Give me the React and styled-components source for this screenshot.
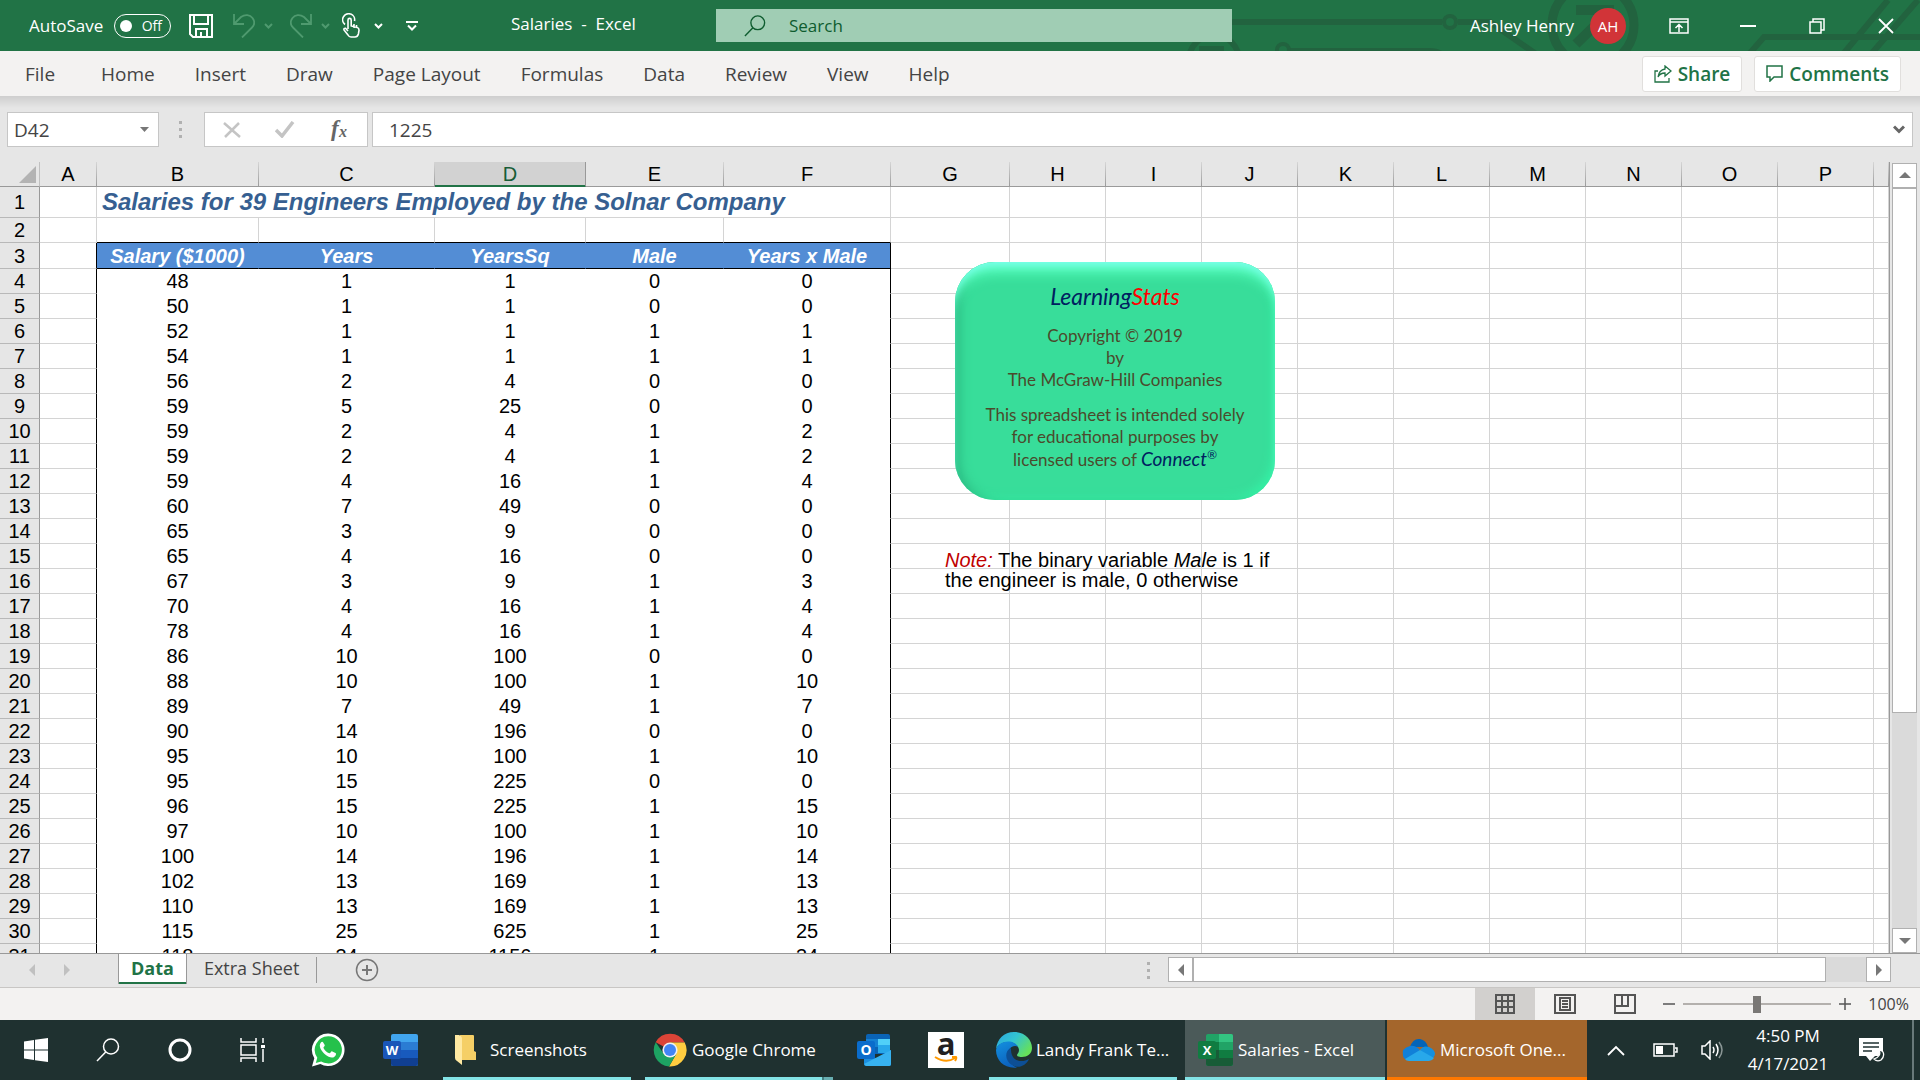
import React, { useState } from 'react';
import styled, { createGlobalStyle, css } from 'styled-components';

const GlobalStyle = createGlobalStyle`
  * {
    box-sizing: border-box;
  }

  body {
    margin: 0;
    font-family: 'Open Sans', 'Noto Sans', sans-serif;
    color: #444;
  }

  button, input {
    font: inherit;
    color: inherit;
    border: none;
    background: none;
    padding: 0;
    margin: 0;
  }

  svg {
    display: block;
    flex: none;
  }
`;

const Window = styled.div`
  display: flex;
  flex-direction: column;
  height: 100vh;
  overflow: hidden;
  background: #e6e6e6;
`;

/* ---------- title bar ---------- */

const TitleBar = styled.header`
  position: relative;
  display: grid;
  grid-template-columns: 511px 205px minmax(200px, 516px) 1fr;
  align-items: center;
  height: 51px;
  flex: none;
  background: #217346;
  color: #fff;
  font-size: 17px;
`;

const Circuit = styled.svg`
  position: absolute;
  right: 0;
  top: 0;
`;

const QuickAccess = styled.div`
  display: flex;
  align-items: center;
  height: 51px;
  padding-left: 29px;
`;

const AutoSaveLabel = styled.span`
  min-width: 85px;
`;

const Toggle = styled.button`
  display: flex;
  align-items: center;
  justify-content: space-between;
  width: 57px;
  height: 24px;
  margin-right: 16px;
  padding: 0 8px 0 5px;
  border: 1px solid #fff;
  border-radius: 12px;
  font-size: 14px;
`;

const Knob = styled.span`
  width: 12px;
  height: 12px;
  border-radius: 50%;
  background: #fff;
`;

const ToolButton = styled.button`
  display: flex;
  align-items: center;
  justify-content: center;
  width: ${(props) => props.$width || 28}px;
  height: 34px;
  margin-left: ${(props) => props.$gap || 0}px;
  color: ${(props) => (props.$dim ? '#4f9a6f' : '#fff')};
`;

const DocTitle = styled.span`
  position: relative;
  padding-bottom: 4px;
  white-space: pre;
`;

const SearchBox = styled.label`
  position: relative;
  display: flex;
  align-items: center;
  height: 33px;
  padding-left: 28px;
  background: #a0cdb4;
  color: #0e5c2f;

  input {
    flex: 1;
    margin-left: 23px;
    outline: none;
  }

  input::placeholder {
    color: #0e5c2f;
    opacity: 1;
  }
`;

const Account = styled.div`
  position: relative;
  display: flex;
  align-items: center;
  justify-content: flex-end;
`;

const Avatar = styled.span`
  width: 36px;
  height: 36px;
  margin: 0 18px 0 16px;
  border-radius: 50%;
  background: #d13438;
  font-size: 15px;
  line-height: 36px;
  text-align: center;
`;

/* ---------- ribbon ---------- */

const Ribbon = styled.nav`
  display: flex;
  align-items: center;
  height: 45px;
  flex: none;
  padding: 0 19px 0 5px;
  background: #f3f2f1;
  font-size: 19px;
`;

const RibbonTab = styled.button`
  height: 45px;
  padding: 0 20px;
  white-space: nowrap;

  &:first-child {
    margin-right: 6px;
  }
`;

const RibbonAction = styled.button`
  display: flex;
  align-items: center;
  gap: 6px;
  height: 36px;
  margin-left: 12px;
  padding: 0 11px;
  border: 1px solid #e1dfdd;
  border-radius: 3px;
  background: #fff;
  color: #217346;
  font-weight: 600;
`;

const Spacer = styled.div`
  flex: 1;
`;

/* ---------- formula bar ---------- */

const FormulaBar = styled.div`
  display: flex;
  align-items: flex-start;
  height: 66px;
  flex: none;
  padding: 16px 7px 0;
  background: linear-gradient(#cecece, #e6e6e6 12px);
  font-size: 19px;
`;

const Field = styled.div`
  display: flex;
  align-items: center;
  height: 35px;
  border: 1px solid #c6c6c6;
  background: #fff;

  input {
    flex: 1;
    min-width: 0;
    outline: none;
  }
`;

const NameBox = styled(Field)`
  width: 152px;
  padding: 0 9px 0 6px;
`;

const FormulaButtons = styled(Field)`
  justify-content: space-between;
  width: 164px;
  margin-right: 4px;
  padding: 0 18px;
`;

const FormulaInput = styled(Field)`
  flex: 1;
  padding: 0 7px 0 16px;
`;

const Dots = styled.span`
  display: flex;
  flex-direction: column;
  gap: 4px;
  margin: ${(props) => props.$margin};

  i {
    width: 3px;
    height: 3px;
    background: #b1b1b1;
  }
`;

/* ---------- worksheet ---------- */

const SheetPane = styled.main`
  display: flex;
  flex: 1;
  min-height: 0;
`;

const GridArea = styled.div`
  position: relative;
  flex: 1;
  min-width: 0;
  overflow: hidden;
  border-right: 1px solid #999;
  background: #fff;
`;

const Grid = styled.table`
  width: 100%;
  table-layout: fixed;
  border-collapse: separate;
  border-spacing: 0;
  font-family: 'Liberation Sans', Arial, sans-serif;
  font-size: 20px;
  line-height: 24px;
  color: #000;
  text-align: center;

  th, td {
    padding: 0;
    font-weight: 400;
    white-space: nowrap;
  }
`;

const Row = styled.tr`
  height: ${(props) => props.$height || 25}px;
`;

const ColumnHead = styled.th`
  border-right: 1px solid;
  border-image: linear-gradient(#d8d8d8, #999) 1;
  border-bottom: 1px solid #999;
  background: #e6e6e6;

  ${(props) =>
    props.$selected &&
    css`
      border-image: none;
      border-right-color: #999;
      border-bottom-color: #217346;
      box-shadow: inset 0 -1px #217346;
      background: #d2d2d2;
      color: #185c37;
    `}
`;

const Corner = styled.th`
  border-right: 1px solid #c0c0c0;
  border-bottom: 1px solid #999;
  background: #e6e6e6;

  svg {
    margin-left: 19px;
  }
`;

const RowHead = styled.th`
  border-right: 1px solid #999;
  border-bottom: 1px solid #b8b8b8;
  background: #e6e6e6;
`;

const Cell = styled.td`
  border-right: 1px solid ${(props) => props.$right || '#d4d4d4'};
  border-bottom: 1px solid ${(props) => props.$bottom || '#d4d4d4'};
`;

const SheetTitle = styled(Cell)`
  && {
    padding-left: 5px;
    text-align: left;
    font-size: 24px;
    font-weight: 700;
  }
  font-style: italic;
  color: #365f91;
`;

const FieldHead = styled(Cell)`
  && {
    font-weight: 700;
  }
  font-style: italic;
  background: #538dd5;
  color: #fff;
`;

const Badge = styled.div`
  position: absolute;
  left: 955px;
  top: 100px;
  width: 320px;
  height: 238px;
  padding-top: 22px;
  border-radius: 40px;
  background: #38dd9a;
  box-shadow:
    inset 0 8px 8px -4px #7cffec,
    inset 0 18px 12px -6px #54fcba,
    inset 8px 0 12px -4px #2bb880,
    inset -6px -6px 10px -4px #36f2a6;
  font-family: Lato, 'Open Sans', sans-serif;
  font-size: 17px;
  line-height: 22px;
  text-align: center;
  color: #4b4a2c;

  p {
    margin: 0 0 13px;
  }

  em {
    font-size: 19px;
    color: #002060;
  }

  sup {
    font-size: 12px;
    line-height: 0;
  }
`;

const BadgeTitle = styled.h2`
  margin: 0 0 17px;
  font-size: 23px;
  font-weight: 400;
  font-style: italic;
  line-height: 24px;
  color: #002060;

  span {
    color: #ff0000;
  }
`;

const Note = styled.p`
  position: absolute;
  left: 945px;
  top: 388px;
  width: 345px;
  margin: 0;
  font-family: 'Liberation Sans', Arial, sans-serif;
  font-size: 20px;
  line-height: 20px;
  color: #000;

  span {
    font-style: italic;
    color: #c00000;
  }
`;

/* ---------- scroll bars ---------- */

const VerticalScroll = styled.div`
  display: flex;
  flex-direction: column;
  width: 30px;
  padding: 1px 3px 0 2px;
`;

const HorizontalScroll = styled.div`
  display: flex;
  width: 723px;
  height: 25px;
  margin: 3px 29px 0 0;
`;

const ScrollTrack = styled.div`
  display: flex;
  flex-direction: ${(props) => (props.$vertical ? 'column' : 'row')};
  flex: 1;
  background: #dadada;
`;

const ScrollThumb = styled.div`
  flex: 0 0 ${(props) => props.$size};
  border: 1px solid #b0b0b0;
  background: #fff;
`;

const ScrollButton = styled.button`
  display: flex;
  align-items: center;
  justify-content: center;
  flex: none;
  width: 25px;
  height: 25px;
  border: 1px solid #b0b0b0;
  background: #fff;
`;

/* ---------- sheet tabs and status bar ---------- */

const TabBar = styled.div`
  display: flex;
  align-items: flex-start;
  height: 35px;
  flex: none;
  border-top: 1px solid #999;
  border-bottom: 1px solid #c8c6c4;
  font-size: 18px;
`;

const TabArrows = styled.div`
  display: flex;
  align-items: center;
  gap: 23px;
  width: 118px;
  height: 31px;
  padding-left: 26px;
`;

const SheetTab = styled.button`
  height: 30px;
  padding: 0 17px 2px;

  ${(props) =>
    props.$active &&
    css`
      padding: 0 12px 2px;
      border: solid #999;
      border-width: 0 1px;
      box-shadow: inset 0 -2px #217346;
      background: #fff;
      color: #217346;
      font-weight: 700;
    `}
`;

const TabDivider = styled.span`
  width: 1px;
  height: 26px;
  margin: 3px 38px 0 0;
  background: #999;
`;

const AddSheet = styled.button`
  margin-top: 4px;
`;

const StatusBar = styled.footer`
  display: flex;
  align-items: center;
  justify-content: flex-end;
  height: 32px;
  flex: none;
  padding-right: 11px;
  background: #f3f2f1;
  font-size: 16px;
`;

const ViewButton = styled.button`
  display: flex;
  align-items: center;
  justify-content: center;
  width: 60px;
  height: 32px;
  background: ${(props) => (props.$active ? '#d2d0ce' : 'none')};
`;

const ZoomButton = styled.button`
  width: 12px;
  margin: 0 8px;
`;

const ZoomSlider = styled.input`
  width: 148px;
  height: 18px;
  appearance: none;
  background: linear-gradient(#b3b0ad, #b3b0ad) center / 100% 2px no-repeat;

  &::-webkit-slider-thumb {
    appearance: none;
    width: 8px;
    height: 17px;
    background: #797775;
  }
`;

const ZoomLevel = styled.span`
  min-width: 50px;
  text-align: right;
`;

/* ---------- taskbar ---------- */

const Taskbar = styled.div`
  display: flex;
  height: 60px;
  flex: none;
  background: #1f3130;
  color: #fff;
  font-size: 17px;
`;

const TaskIcon = styled.button`
  display: flex;
  align-items: center;
  justify-content: center;
  width: 72px;
  margin-left: ${(props) => props.$gap || 0}px;
`;

const TaskItem = styled.button`
  display: flex;
  align-items: center;
  gap: ${(props) => props.$gap || 5}px;
  width: ${(props) => props.$width || 188}px;
  margin-left: ${(props) => props.$before || 0}px;
  padding-left: ${(props) => props.$inset || 8}px;
  padding-top: 2px;
  border-bottom: 3px solid ${(props) => props.$line || '#83e3e6'};
  background: ${(props) => props.$fill || 'none'};
  white-space: nowrap;

  ${(props) =>
    props.$stacked &&
    css`
      border-image: linear-gradient(to right, #83e3e6 174px, #477f80 174px, #477f80 176px, #68aeb1 176px) 3;
    `}
`;

const Tray = styled.div`
  display: flex;
  align-items: center;
  margin-left: auto;
`;

const Clock = styled.time`
  width: 90px;
  margin: 0 26px 0 18px;
  line-height: 28px;
  text-align: center;
  white-space: nowrap;
`;

const ShowDesktop = styled.button`
  width: 8px;
  height: 60px;
  margin-left: 27px;
  border-left: 2px solid #69797a;
`;

const AmazonTile = styled.span`
  display: flex;
  background: #fff;
`;

/* ---------- small drawings ---------- */

const Chevron = ({ size = 9, width = 2 }) => (
  <svg width={size} height="6" viewBox="0 0 9 6" fill="none" stroke="currentColor" strokeWidth={width}>
    <path d="M1 1l3.5 3.5L8 1" />
  </svg>
);

const Arrow = ({ dir, color = '#777' }) => {
  const shapes = {
    up: 'M0 8L6 2l6 6z',
    down: 'M0 3h12L6 9z',
    left: 'M9 0v12L3 6z',
    right: 'M3 0v12l6-6z',
  };
  return (
    <svg width="12" height="12" fill={color}>
      <path d={shapes[dir]} />
    </svg>
  );
};

const SearchGlyph = ({ size = 24 }) => (
  <svg width={size} height={size} viewBox="0 0 24 24" fill="none" stroke="currentColor" strokeWidth="1.5">
    <circle cx="15" cy="8.5" r="7.5" />
    <path d="M9.7 14L1 23" />
  </svg>
);

const UndoGlyph = ({ flip }) => (
  <svg width="22" height="24" viewBox="0 0 22 24" fill="none" stroke="currentColor" strokeWidth="1.8">
    <path
      transform={flip ? 'translate(22 0) scale(-1 1)' : undefined}
      d="M1 0v10h10M1.5 9.5L8 3c4-3 9-2.500 11.500 1s2 7-.5 9.500L9 23.500"
    />
  </svg>
);

const OfficeLogo = ({ letter, tones, tile }) => (
  <svg width="36" height="34" viewBox="0 0 36 34">
    <rect x="9" y="1" width="27" height="32" rx="2" fill={tones[0]} />
    <path d="M9 9h27v8H9z" fill={tones[1]} />
    <path d="M9 17h27v8H9z" fill={tones[2]} />
    <path d="M9 25h27v6a2 2 0 0 1-2 2H11a2 2 0 0 1-2-2z" fill={tones[3]} />
    {letter === 'X' && (
      <>
        <path d="M22 1h12a2 2 0 0 1 2 2v6H22z" fill="#33c481" />
        <path d="M22 9h14v8H22z" fill="#21a366" />
        <path d="M9 17h13v8H9z" fill="#185c37" />
      </>
    )}
    <rect x="1" y="8" width="18" height="18" rx="2" fill={tile} />
    <text x="10" y="22" fill="#fff" fontSize="13" fontWeight="700" textAnchor="middle" fontFamily="Open Sans, sans-serif">
      {letter}
    </text>
  </svg>
);

const OutlookLogo = () => (
  <svg width="36" height="34" viewBox="0 0 36 34">
    <rect x="10" y="1" width="24" height="20" rx="2" fill="#0a63b5" />
    <path d="M10 6h12v8H10z" fill="#1480d3" />
    <path d="M22 6h12v6H22z" fill="#50d0f8" />
    <path d="M22 12h12v8H22z" fill="#28a8ea" />
    <path d="M8 18l13 8 14-9v14a2 2 0 0 1-2 2H10a2 2 0 0 1-2-2z" fill="#1b8fe0" />
    <path d="M8 31l27-14v14a2 2 0 0 1-2 2H10z" fill="#37b2f0" />
    <rect x="1" y="8" width="18" height="18" rx="2" fill="#0a6ccb" />
    <text x="10" y="22" fill="#fff" fontSize="14" fontWeight="700" textAnchor="middle" fontFamily="Open Sans, sans-serif">
      O
    </text>
  </svg>
);

const ChromeLogo = () => (
  <svg width="34" height="34" viewBox="0 0 34 34">
    <path d="M17 17L2.700 9.200A16.500 16.500 0 0 1 31.700 9.500L17 9.500z" fill="#db4437" />
    <path d="M17 17L31.700 9.500A16.500 16.500 0 0 1 16 33.500L23.500 20.500z" fill="#ffcd40" />
    <path d="M17 17L23.500 20.500 16 33.500A16.500 16.500 0 0 1 2.700 9.200L10.500 20.500z" fill="#1da362" />
    <path d="M17 9.500h14.700L24 19z" fill="#ffcd40" />
    <circle cx="17" cy="17" r="7.600" fill="#f1f1f1" />
    <circle cx="17" cy="17" r="6" fill="#4285f4" />
  </svg>
);

const EdgeLogo = () => (
  <svg width="36" height="36" viewBox="0 0 36 36">
    <defs>
      <linearGradient id="edgeTop" x1="0" y1="0" x2="1" y2="0.600">
        <stop offset="0" stopColor="#2aa5e0" />
        <stop offset="0.500" stopColor="#33c4d0" />
        <stop offset="1" stopColor="#66e05a" />
      </linearGradient>
      <linearGradient id="edgeLow" x1="0" y1="0" x2="0.400" y2="1">
        <stop offset="0" stopColor="#1391e0" />
        <stop offset="1" stopColor="#0c62bd" />
      </linearGradient>
    </defs>
    <path d="M0 17C1 7 8 0 18 0c11 0 18 8 18 16 0 6-5 9-10 9-4 0-5-1-5-2 0-1 2-2 2-5 0-4-5-8-11-8C6 10 2 13 0 17z" fill="url(#edgeTop)" />
    <path d="M0 18c1-5 6-8.500 12-8.500 5 0 8 2 10 5-6-2-10 2-10 8 0 8 6 12 9 13C9 37 0 29 0 18z" fill="url(#edgeLow)" />
    <path d="M15 16c-7 3-6 13 1 17 6 4 14 1 17-6-5 3-13 3-16-2-2-3-2-6-2-9z" fill="#0d4f95" />
  </svg>
);

const WhatsAppLogo = () => (
  <svg width="34" height="34" viewBox="0 0 34 34">
    <path d="M17 .5a16.300 16.300 0 1 1-7.600 30.600L1 33.500l2.300-8.300A16.300 16.300 0 0 1 17 .5z" fill="#fff" />
    <path d="M17.200 3.200a13.600 13.600 0 1 1-7 25.200l-5.400 1.500 1.500-5.200A13.600 13.600 0 0 1 17.200 3.200z" fill="#25c14b" />
    <path
      d="M12.200 9.500c-.5-.9-1.500-.8-2.300.1-3 3.600.7 8.800 4.300 11.900 4 3.300 8 4.300 10.200 1.200.8-1.300.9-2.200.1-2.700l-3.200-1.600c-1.400-.6-1.800 2.300-3 1.900-2.400-.9-4.700-3-5.800-5.400-.4-1 1.700-1.700 1.200-3z"
      fill="#fff"
    />
  </svg>
);

/* ---------- data ---------- */

const ribbonTabs = ['File', 'Home', 'Insert', 'Draw', 'Page Layout', 'Formulas', 'Data', 'Review', 'View', 'Help'];

const columns = [
  ['A', 57], ['B', 162], ['C', 176], ['D', 151], ['E', 138], ['F', 167], ['G', 119],
  ['H', 96], ['I', 96], ['J', 96], ['K', 96], ['L', 96], ['M', 96], ['N', 96], ['O', 96], ['P', 96],
];

const fields = ['Salary ($1000)', 'Years', 'YearsSq', 'Male', 'Years x Male'];

// salary, years, male
const engineers = [
  [48, 1, 0], [50, 1, 0], [52, 1, 1], [54, 1, 1], [56, 2, 0], [59, 5, 0], [59, 2, 1],
  [59, 2, 1], [59, 4, 1], [60, 7, 0], [65, 3, 0], [65, 4, 0], [67, 3, 1], [70, 4, 1],
  [78, 4, 1], [86, 10, 0], [88, 10, 1], [89, 7, 1], [90, 14, 0], [95, 10, 1], [95, 15, 0],
  [96, 15, 1], [97, 10, 1], [100, 14, 1], [102, 13, 1], [110, 13, 1], [115, 25, 1], [118, 34, 1],
];

const EmptyCells = ({ count }) => Array.from({ length: count }, (_, i) => <Cell key={i} />);

const Worksheet = () => (
  <Grid>
    <colgroup>
      <col width="40" />
      {columns.map(([name, width]) => (
        <col key={name} width={width} />
      ))}
      <col />
    </colgroup>
    <thead>
      <Row>
        <Corner>
          <svg width="17" height="17" fill="#b3b3b3"><path d="M17 0v17H0z" /></svg>
        </Corner>
        {columns.map(([name]) => (
          <ColumnHead key={name} $selected={name === 'D'}>{name}</ColumnHead>
        ))}
        <ColumnHead />
      </Row>
    </thead>
    <tbody>
      <Row $height={31}>
        <RowHead>1</RowHead>
        <Cell />
        <SheetTitle colSpan={5}>Salaries for 39 Engineers Employed by the Solnar Company</SheetTitle>
        <EmptyCells count={11} />
      </Row>
      <Row>
        <RowHead>2</RowHead>
        <Cell />
        {fields.map((name) => <Cell key={name} $bottom="#000" />)}
        <EmptyCells count={11} />
      </Row>
      <Row $height={26}>
        <RowHead>3</RowHead>
        <Cell $right="#000" />
        {fields.map((name, i) => (
          <FieldHead key={name} $bottom="#000" $right={i === 4 ? '#000' : '#538dd5'}>{name}</FieldHead>
        ))}
        <EmptyCells count={11} />
      </Row>
      {engineers.map(([salary, years, male], row) => (
        <Row key={row}>
          <RowHead>{row + 4}</RowHead>
          <Cell $right="#000" />
          {[salary, years, years * years, male, years * male].map((value, i) => (
            <Cell key={i} $bottom="#fff" $right={i === 4 ? '#000' : '#fff'}>{value}</Cell>
          ))}
          <EmptyCells count={11} />
        </Row>
      ))}
    </tbody>
  </Grid>
);

const App = () => {
  const [formula, setFormula] = useState('1225');
  const [cellName, setCellName] = useState('D42');
  const [zoom, setZoom] = useState(100);

  return (
    <Window>
      <GlobalStyle />

      <TitleBar>
        <Circuit width="740" height="51" viewBox="1180 0 740 51" fill="none" stroke="#22633f" strokeWidth="6">
          <path d="M1180 22h262M1458 22h32l46 32M1289 51h140q8 0 12 3" />
          <circle cx="1450" cy="22" r="6" strokeWidth="4" />
          <circle cx="1283" cy="50" r="6" strokeWidth="4" />
          <circle cx="1214" cy="60" r="25" />
          <path d="M1199 49h25" />
          <circle cx="1593" cy="25" r="41" strokeWidth="9" />
          <path d="M1576 10h38M1611 10l-35 34" strokeWidth="10" />
          <path d="M1750 53l14-16h156M1844 53l44-53M1872 53l46-53" />
        </Circuit>
        <QuickAccess>
          <AutoSaveLabel id="autosave">AutoSave</AutoSaveLabel>
          <Toggle role="switch" aria-checked="false" aria-labelledby="autosave">
            <Knob />
            Off
          </Toggle>
          <ToolButton aria-label="Save">
            <svg width="24" height="24" fill="none" stroke="currentColor" strokeWidth="2">
              <path d="M1 1h22v22H4l-3-3zM5 1v9h14V1M7 23v-8h11v8M12 18v5" />
            </svg>
          </ToolButton>
          <ToolButton aria-label="Undo" $dim $width={30} $gap={14}>
            <UndoGlyph />
          </ToolButton>
          <ToolButton aria-label="Undo history" $dim $width={18}><Chevron /></ToolButton>
          <ToolButton aria-label="Redo" $dim $width={30} $gap={9}>
            <UndoGlyph flip />
          </ToolButton>
          <ToolButton aria-label="Redo history" $dim $width={18}><Chevron /></ToolButton>
          <ToolButton aria-label="Touch mode" $width={34}>
            <svg width="18" height="25" viewBox="0 0 18 25" fill="none" stroke="currentColor" strokeWidth="1.6">
              <path d="M3 11.500A6 6 0 1 1 12.500 8M6 16V7a1.600 1.600 0 0 1 3.200 0v6l6 1.500q2 .5 1.800 3l-.6 3.500q-.8 3-3.400 3H9q-2 0-3-2l-4-5q-.4-2 1.500-1.800L6 18M12 11v4M14.500 12v3" />
            </svg>
          </ToolButton>
          <ToolButton aria-label="Touch mode options" $width={20}><Chevron /></ToolButton>
          <ToolButton aria-label="Customize toolbar" $width={48}>
            <svg width="12" height="10" fill="none" stroke="currentColor" strokeWidth="2">
              <path d="M0 1h12M2 4.500l4 4 4-4" />
            </svg>
          </ToolButton>
        </QuickAccess>
        <DocTitle>{'Salaries  -  Excel'}</DocTitle>
        <SearchBox>
          <SearchGlyph size={22} />
          <input type="text" placeholder="Search" aria-label="Search" />
        </SearchBox>
        <Account>
          Ashley Henry
          <Avatar>AH</Avatar>
          <ToolButton aria-label="Ribbon display" $width={69}>
            <svg width="20" height="16" fill="none" stroke="currentColor" strokeWidth="1.500">
              <path d="M1 1h18v14H1zM1 4h18M10 14V7M6.500 10L10 6.500l3.500 3.500" />
            </svg>
          </ToolButton>
          <ToolButton aria-label="Minimize" $width={69}>
            <svg width="16" height="2" fill="currentColor"><path d="M0 0h16v2H0z" /></svg>
          </ToolButton>
          <ToolButton aria-label="Restore" $width={69}>
            <svg width="16" height="16" fill="none" stroke="currentColor" strokeWidth="1.500">
              <path d="M1 4h11v11H1zM4 4V1h11v11h-3" />
            </svg>
          </ToolButton>
          <ToolButton aria-label="Close" $width={69}>
            <svg width="16" height="16" fill="none" stroke="currentColor" strokeWidth="1.800">
              <path d="M1 1l14 14M15 1L1 15" />
            </svg>
          </ToolButton>
        </Account>
      </TitleBar>

      <Ribbon>
        {ribbonTabs.map((name) => (
          <RibbonTab key={name}>{name}</RibbonTab>
        ))}
        <Spacer />
        <RibbonAction>
          <svg width="18" height="18" fill="none" stroke="currentColor" strokeWidth="1.300">
            <path d="M4 6H1v11h14v-4M11 1l6 5-6 5V8q-5 0-7 4 1-7 7-8z" />
          </svg>
          Share
        </RibbonAction>
        <RibbonAction>
          <svg width="17" height="17" fill="none" stroke="currentColor" strokeWidth="1.500">
            <path d="M1 1h15v11H8l-4 4v-4H1z" />
          </svg>
          Comments
        </RibbonAction>
      </Ribbon>

      <FormulaBar>
        <NameBox>
          <input aria-label="Name box" value={cellName} onChange={(e) => setCellName(e.target.value)} />
          <svg width="9" height="5" fill="#777"><path d="M0 0h9L4.500 5z" /></svg>
        </NameBox>
        <Dots $margin="9px 22px 0 20px"><i /><i /><i /></Dots>
        <FormulaButtons>
          <button aria-label="Cancel">
            <svg width="18" height="16" fill="none" stroke="#c4c4c4" strokeWidth="2.500"><path d="M1 1l16 14M16 1L2 15" /></svg>
          </button>
          <button aria-label="Enter">
            <svg width="20" height="17" fill="none" stroke="#c4c4c4" strokeWidth="3.500"><path d="M1 9l6 6L18 1" /></svg>
          </button>
          <button aria-label="Insert function">
            <svg width="20" height="24" fill="#666" fontFamily="Liberation Serif, serif" fontStyle="italic" fontWeight="700">
              <text x="2" y="18" fontSize="23">f</text>
              <text x="10" y="19" fontSize="16">x</text>
            </svg>
          </button>
        </FormulaButtons>
        <FormulaInput>
          <input aria-label="Formula" value={formula} onChange={(e) => setFormula(e.target.value)} />
          <button aria-label="Expand formula bar">
            <svg width="12" height="9" fill="none" stroke="#666" strokeWidth="3"><path d="M1 1.500l5 5 5-5" /></svg>
          </button>
        </FormulaInput>
      </FormulaBar>

      <SheetPane>
        <GridArea>
          <Worksheet />
          <Badge>
            <BadgeTitle>Learning<span>Stats</span></BadgeTitle>
            <p>
              Copyright © 2019<br />
              by<br />
              The McGraw-Hill Companies
            </p>
            <p>
              This spreadsheet is intended solely<br />
              for educational purposes by<br />
              licensed users of <em>Connect<sup>®</sup></em>
            </p>
          </Badge>
          <Note>
            <span>Note:</span> The binary variable <i>Male</i> is 1 if<br />
            the engineer is male, 0 otherwise
          </Note>
        </GridArea>
        <VerticalScroll>
          <ScrollButton aria-label="Scroll up"><Arrow dir="up" /></ScrollButton>
          <ScrollTrack $vertical><ScrollThumb $size="71%" /></ScrollTrack>
          <ScrollButton aria-label="Scroll down"><Arrow dir="down" /></ScrollButton>
        </VerticalScroll>
      </SheetPane>

      <TabBar>
        <TabArrows>
          <Arrow dir="left" color="#c0c0c0" />
          <Arrow dir="right" color="#c0c0c0" />
        </TabArrows>
        <SheetTab $active>Data</SheetTab>
        <SheetTab>Extra Sheet</SheetTab>
        <TabDivider />
        <AddSheet aria-label="New sheet">
          <svg width="24" height="24" fill="none" stroke="#777" strokeWidth="1.500">
            <circle cx="12" cy="12" r="10.500" />
            <path d="M12 7v10M7 12h10" strokeWidth="2" />
          </svg>
        </AddSheet>
        <Spacer />
        <Dots $margin="8px 18px 0 0"><i /><i /><i /></Dots>
        <HorizontalScroll>
          <ScrollButton aria-label="Scroll left"><Arrow dir="left" /></ScrollButton>
          <ScrollTrack><ScrollThumb $size="94%" /></ScrollTrack>
          <ScrollButton aria-label="Scroll right"><Arrow dir="right" /></ScrollButton>
        </HorizontalScroll>
      </TabBar>

      <StatusBar>
        <ViewButton $active aria-label="Normal view">
          <svg width="20" height="20" fill="none" stroke="#555" strokeWidth="2">
            <path d="M1 1h18v18H1zM7 1v18M13 1v18M1 7h18M1 13h18" />
          </svg>
        </ViewButton>
        <ViewButton aria-label="Page layout view">
          <svg width="22" height="20" fill="none" stroke="#555" strokeWidth="2">
            <path d="M1 1h20v18H1zM6 4h10v12H6zM8 7h6M8 10h6M8 13h6" />
          </svg>
        </ViewButton>
        <ViewButton aria-label="Page break view">
          <svg width="22" height="20" fill="none" stroke="#555" strokeWidth="2">
            <path d="M1 1h20v18H1zM1 12h13V1M8 1v11" />
          </svg>
        </ViewButton>
        <ZoomButton aria-label="Zoom out">
          <svg width="12" height="12" stroke="#555" strokeWidth="1.500"><path d="M0 6h12" /></svg>
        </ZoomButton>
        <ZoomSlider
          type="range"
          aria-label="Zoom"
          min="10"
          max="190"
          value={zoom}
          onChange={(e) => setZoom(Number(e.target.value))}
        />
        <ZoomButton aria-label="Zoom in">
          <svg width="12" height="12" stroke="#555" strokeWidth="1.500"><path d="M0 6h12M6 0v12" /></svg>
        </ZoomButton>
        <ZoomLevel>{zoom}%</ZoomLevel>
      </StatusBar>

      <Taskbar>
        <TaskIcon aria-label="Start">
          <svg width="24" height="24" fill="#fff">
            <path d="M0 3.500l10-1.500v9.500H0zM11 1.800L24 0v11.500H11zM0 12.500h10V22L0 20.500zM11 12.500h13V24l-13-1.800z" />
          </svg>
        </TaskIcon>
        <TaskIcon aria-label="Search"><SearchGlyph /></TaskIcon>
        <TaskIcon aria-label="Cortana">
          <svg width="24" height="24" fill="none" stroke="#fff" strokeWidth="3"><circle cx="12" cy="12" r="10" /></svg>
        </TaskIcon>
        <TaskIcon aria-label="Task view">
          <svg width="25" height="24" fill="none" stroke="#fff" strokeWidth="1.500">
            <path d="M1 0v4h15V0M1 7h15v10H1zM1 24v-4h15v4M23 0v5M23 11v13" />
            <path d="M21 7h4v3h-4z" fill="#fff" stroke="none" />
          </svg>
        </TaskIcon>
        <TaskIcon aria-label="WhatsApp" $gap={4}><WhatsAppLogo /></TaskIcon>
        <TaskIcon aria-label="Word">
          <OfficeLogo letter="W" tones={['#41a5ee', '#2b7cd3', '#185abd', '#103f91']} tile="#1a56b8" />
        </TaskIcon>
        <TaskItem $before={7} $inset={12} $gap={14}>
          <svg width="21" height="32" viewBox="0 0 21 32">
            <path d="M5 1h13q1 0 1 1v15l2 1v8H7z" fill="#f5cf66" />
            <path d="M0 1h4q3 1 3 4v26l-5-4q-2-1-2-3z" fill="#ffe9a2" />
          </svg>
          Screenshots
        </TaskItem>
        <TaskItem $before={14} $stacked><ChromeLogo />Google Chrome</TaskItem>
        <TaskIcon aria-label="Outlook" $gap={5}><OutlookLogo /></TaskIcon>
        <TaskIcon aria-label="Amazon">
          <AmazonTile>
            <svg width="36" height="36" viewBox="0 0 36 36">
              <text x="18" y="23" fontSize="31" fontWeight="700" textAnchor="middle" fill="#221f1f" fontFamily="Open Sans, sans-serif">a</text>
              <path d="M7 25q11 7 20 1M24 25h4q1 1-1 4" fill="none" stroke="#f90" strokeWidth="2" />
            </svg>
          </AmazonTile>
        </TaskIcon>
        <TaskItem $before={7} $inset={7} $gap={4}><EdgeLogo />Landy Frank Te...</TaskItem>
        <TaskItem $before={8} $width={200} $inset={12} $fill="#4b5a59">
          <OfficeLogo letter="X" tones={['#21a366', '#107c41', '#107c41', '#185c37']} tile="#107c41" />
          Salaries - Excel
        </TaskItem>
        <TaskItem $before={2} $width={200} $inset={14} $fill="#a4662c" $line="#ff7800">
          <svg width="34" height="24" viewBox="0 0 34 24">
            <path d="M9 9Q12 0 19 1q6 1 8 8z" fill="#0364b8" />
            <path d="M2 18Q0 10 9 8q5-1 10 4L8 22q-5 0-6-4z" fill="#1180d8" />
            <path d="M19 12q3-5 9-3 6 3 6 7-1 5-6 6z" fill="#1490df" />
            <path d="M4 21l15-9 14 8q-2 3-5 3H8q-3 0-4-2z" fill="#28a8ea" />
          </svg>
          Microsoft One...
        </TaskItem>
        <Tray>
          <svg width="18" height="11" fill="none" stroke="#fff" strokeWidth="1.800"><path d="M1 10l8-8 8 8" /></svg>
          <svg width="76" height="14" fill="none" stroke="#fff" strokeWidth="1.500">
            <path d="M29 1h20v12H29zM50 5h2v4h-2" />
            <path d="M31 3h7v8h-7z" fill="#fff" stroke="none" />
          </svg>
          <svg width="24" height="20" fill="none" stroke="#fff" strokeWidth="1.500">
            <path d="M1 6h3l5-5v18l-5-5H1zM12 7q2 3 0 6M15 4q4 6 0 12" />
            <path d="M18 2q6 8 0 16" stroke="#8a9695" />
          </svg>
          <Clock dateTime="2021-04-17T16:50">4:50 PM<br />4/17/2021</Clock>
          <svg width="26" height="26" viewBox="0 0 26 26">
            <path d="M0 1h24v18H16l-5 5-4-5H0z" fill="#fff" />
            <path d="M4 6h16M4 10h16M4 14h9" stroke="#1f3130" strokeWidth="1.500" />
            <path d="M20 13q3 6-5 9 3 3 7 1 4-4 2-8-1-2-4-2z" fill="#1f3130" stroke="#fff" strokeWidth="1.300" />
          </svg>
          <ShowDesktop aria-label="Show desktop" />
        </Tray>
      </Taskbar>
    </Window>
  );
};

export default App;
